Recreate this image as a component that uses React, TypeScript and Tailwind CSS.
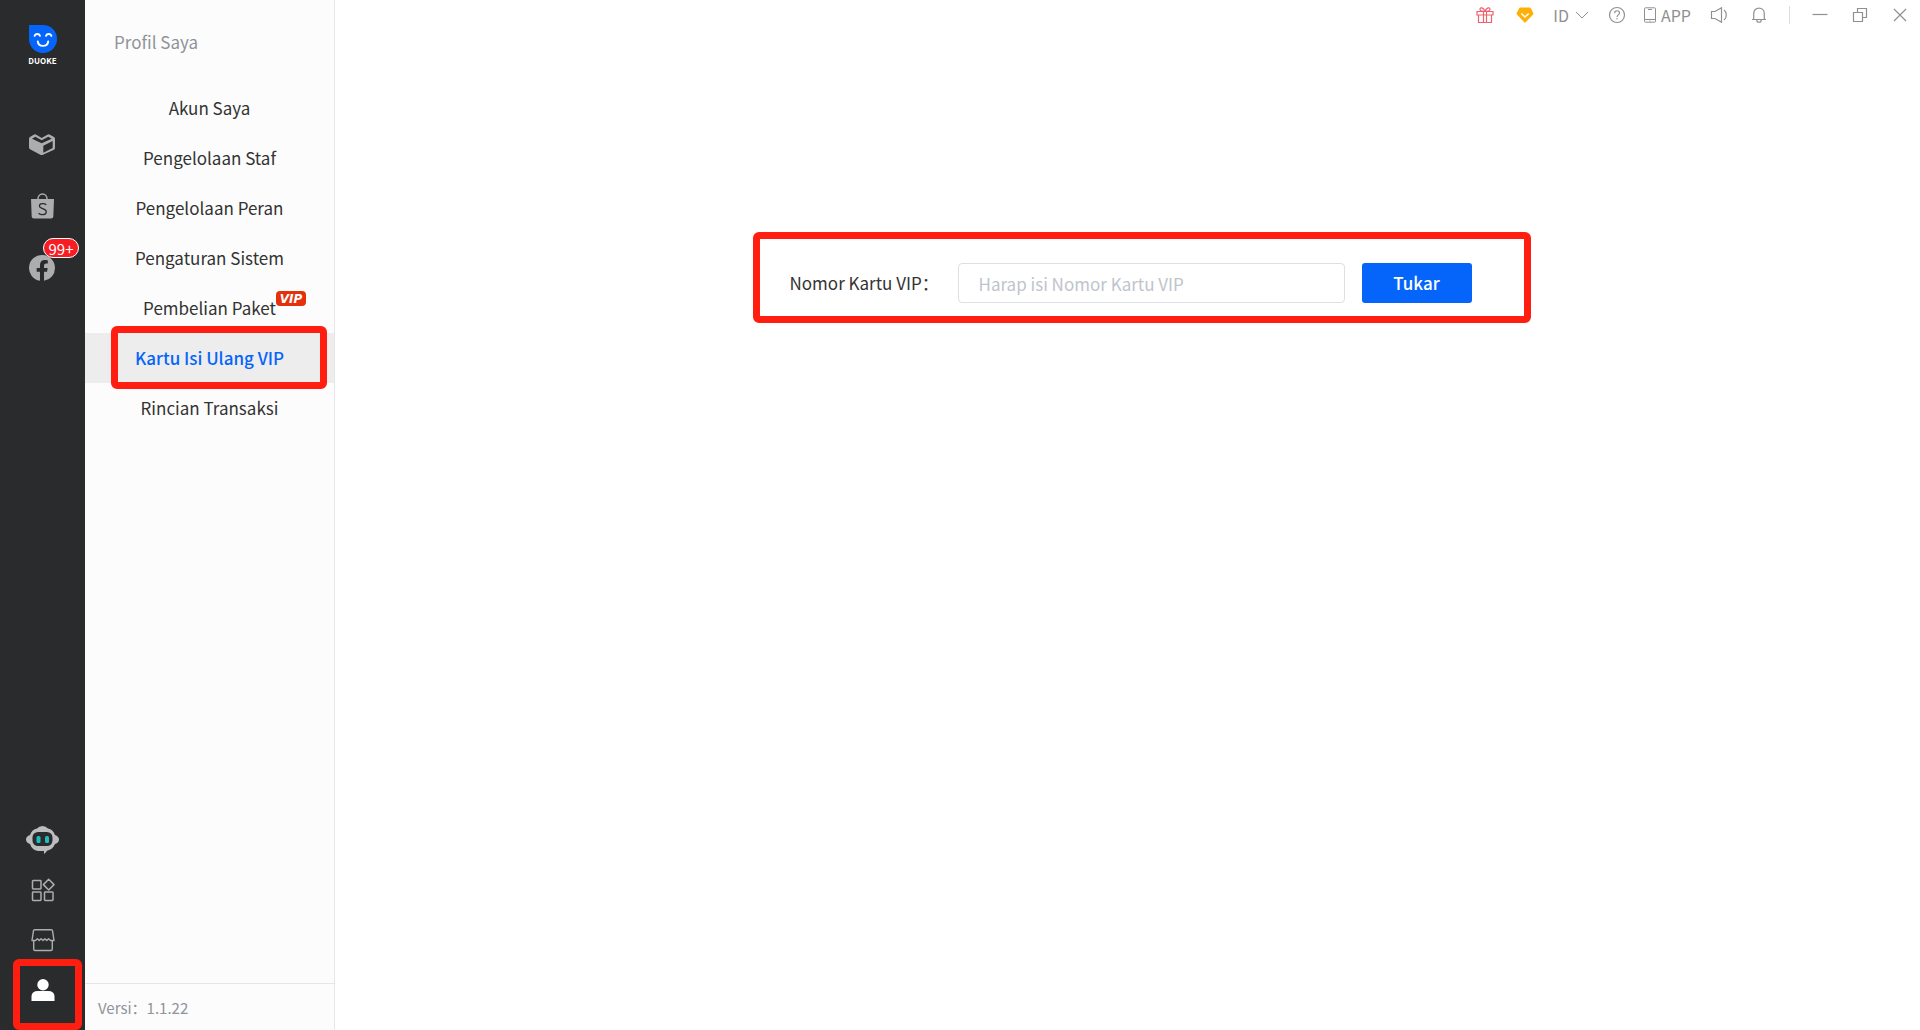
import type { ReactNode } from "react";

const menu = [
  { label: "Akun Saya" },
  { label: "Pengelolaan Staf" },
  { label: "Pengelolaan Peran" },
  { label: "Pengaturan Sistem" },
  { label: "Pembelian Paket", vip: true },
  { label: "Kartu Isi Ulang VIP", active: true },
  { label: "Rincian Transaksi" },
];

function Logo() {
  return (
    <svg width="28" height="28" viewBox="0 0 28 28" fill="none" aria-hidden="true">
      <path d="M0 0h14a14 14 0 1 1-14 14z" fill="#0565fb" />
      <g stroke="#fff" strokeWidth="1.9" strokeLinecap="round">
        <path d="M5.6 10.800a2.900 2.900 0 0 1 5.400 0M17 10.800a2.900 2.900 0 0 1 5.400 0" />
        <path d="M8.800 16.400c.5 6 9.900 6 10.400 0" />
      </g>
    </svg>
  );
}

function BoxIcon() {
  return (
    <svg width="26" height="21" viewBox="0 0 78 63" aria-hidden="true">
      <path d="M14 2q4-2 8 0l16 10 17-10q4-2 8 0l12 7q3 2 3 6v26q0 4-3 6L42 62q-4 2-8 0L3 46q-3-2-3-6V15q0-4 3-6z" fill="#adadad" />
      <path d="M9 14l10-6 19 11 20-11 10 6-30 14z" fill="#292b2d" />
      <path d="M43 35l28-14v21L43 56z" fill="#292b2d" />
    </svg>
  );
}

function BagIcon() {
  return (
    <svg width="23" height="26" viewBox="0 0 23 26" fill="none" aria-hidden="true">
      <path d="M0 6h23l-.7 17.500q-.1 2-2.300 2H3q-2.200 0-2.300-2z" fill="#adadad" />
      <path d="M6.800 7c0-8 9.400-8 9.400 0" stroke="#adadad" strokeWidth="1.500" />
      <path d="M15.300 11.800c-1.500-1.500-6.900-1.900-6.900 1.100 0 3.200 6.900 2.200 6.900 5.800 0 3.700-5.600 3.500-7.700 1.500" stroke="#292b2d" strokeWidth="1.200" />
    </svg>
  );
}

function FacebookIcon() {
  return (
    <svg width="26" height="26" viewBox="0 0 24 24" fill="#adadad" aria-hidden="true">
      <path d="M24 12A12 12 0 1 0 10.130 23.850V15.470H7.080V12h3.050V9.360c0-3.010 1.790-4.670 4.530-4.670 1.310 0 2.690.23 2.690.23v2.960h-1.510c-1.490 0-1.960.92-1.960 1.870V12h3.330l-.53 3.470h-2.800v8.380A12 12 0 0 0 24 12z" />
    </svg>
  );
}

function RobotIcon() {
  return (
    <svg width="33" height="28" viewBox="0 0 33 28" aria-hidden="true">
      <path d="M11 2.500Q13 0 16.500 0T22 2.500q5 .8 7 6.500 4 1.500 4 4.500T29 18q-2 5.500-8 6.700-1 1.800-3 3.300v-3h-6Q6 24 4 18 0 16.500 0 13.500T4 9Q6 3.300 11 2.500z" fill="#bdbdbd" />
      <rect x="6.500" y="6" width="20" height="14" rx="5.500" fill="#292b2d" />
      <rect x="10.500" y="10" width="4" height="7" rx="1.500" fill="#20bdc0" />
      <rect x="19" y="10" width="4" height="7" rx="1.500" fill="#20bdc0" />
    </svg>
  );
}

function AppsIcon() {
  return (
    <svg width="24" height="24" viewBox="0 0 24 24" fill="none" stroke="#adadad" strokeWidth="1.500" aria-hidden="true">
      <rect x="1.500" y="2.500" width="8.500" height="8.500" rx=".7" />
      <rect x="1.500" y="14" width="8.500" height="8.500" rx=".7" />
      <rect x="13.500" y="14" width="8.500" height="8.500" rx=".7" />
      <path d="M17.700 1.200l5.300 5.400-5.300 5.400-5.300-5.400z" strokeLinejoin="round" />
    </svg>
  );
}

function ShopIcon() {
  return (
    <svg width="24" height="24" viewBox="0 0 24 24" fill="none" stroke="#adadad" strokeWidth="1.400" strokeLinejoin="round" aria-hidden="true">
      <path d="M3.700 1.700h16.600q1 0 1.200 1L23 12.500H19.500l-1.900-1.800-1.900 1.800-1.800-1.800-1.900 1.800-1.900-1.800-1.900 1.800-1.800-1.800-1.900 1.800H1L2.500 2.700q.2-1 1.200-1z" />
      <path d="M2.700 13v8q0 1.500 1.500 1.500h15.600q1.500 0 1.500-1.500v-8" />
    </svg>
  );
}

function UserIcon() {
  return (
    <svg width="24" height="22" viewBox="0 0 24 22" fill="#fff" aria-hidden="true">
      <circle cx="12" cy="5.800" r="5.700" />
      <path d="M.5 22v-4.500Q.5 12 7 12h10q6.500 0 6.500 5.500V22z" />
    </svg>
  );
}

function VipTag() {
  return (
    <span className="absolute -top-1 left-full flex h-[15px] w-[30px] items-center justify-center rounded bg-[#e5310b] font-['DejaVu_Sans'] text-xs leading-none font-bold text-white italic">
      VIP
    </span>
  );
}

function Line({ children, color = "#909090" }: { children: ReactNode; color?: string }) {
  return (
    <svg width="18" height="18" viewBox="0 0 18 18" fill="none" stroke={color} strokeWidth="1.200" aria-hidden="true">
      {children}
    </svg>
  );
}

function BarButton({ label, children }: { label: string; children: ReactNode }) {
  return (
    <button aria-label={label} className="flex h-full w-10 items-center justify-center">
      {children}
    </button>
  );
}

function TopBar() {
  return (
    <header className="flex h-[30px] items-center justify-end text-base text-[#909090]">
      <BarButton label="Hadiah">
        <Line color="#f0616b">
          <path d="M1 5.500h16v3.500H1zM2.500 9v7.500h13V9M7.500 5.500v11M10.500 5.500v11M9 5.300C7.500 1.500 4 .8 4 3.200c0 1.500 2 2.100 5 2.100zM9 5.300c1.500-3.800 5-4.500 5-2.100 0 1.500-2 2.100-5 2.100z" />
        </Line>
      </BarButton>
      <BarButton label="Paket VIP">
        <svg width="18" height="18" viewBox="0 0 18 18" aria-hidden="true">
          <path d="M4.500 1.500h9q.8 0 1.200.6L17.300 7q.4.800-.2 1.500L10 16q-1 1-2 0L.9 8.500Q.3 7.800.7 7l2.600-4.900q.4-.6 1.200-.6z" fill="#ffb008" />
          <path d="M5.300 7.500L9 11l3.700-3.500" fill="none" stroke="#fff" strokeWidth="1.500" />
        </svg>
      </BarButton>
      <button className="mx-2 flex h-full items-center gap-1.5">
        ID
        <svg width="14" height="14" viewBox="0 0 14 14" fill="none" stroke="#909090" aria-hidden="true">
          <path d="M1 4l6 6 6-6" />
        </svg>
      </button>
      <BarButton label="Bantuan">
        <Line>
          <circle cx="9" cy="9" r="7.500" />
          <path d="M6.600 7.200c0-3.300 4.900-3.200 4.900-.2 0 1.900-2.500 1.900-2.500 4M9 12v1.300" />
        </Line>
      </BarButton>
      <button className="mr-2 ml-1.5 flex h-full items-center gap-1">
        <svg width="14" height="16" viewBox="0 0 14 16" fill="none" stroke="#909090" aria-hidden="true">
          <rect x="1.500" y=".8" width="11" height="14.400" rx="1" />
          <path d="M5 2.500h4M1.500 12.500h11M6.500 14h1" />
        </svg>
        APP
      </button>
      <BarButton label="Suara">
        <Line>
          <path d="M1.500 5.500H5L11.500 1.800v14.400L5 12.500H1.500zM14 4c3 2 3 8 0 10" />
        </Line>
      </BarButton>
      <BarButton label="Notifikasi">
        <Line>
          <path d="M2 13.500h14M3.700 13.500V7.800c0-7.600 10.600-7.600 10.600 0v5.700M6.800 14c0 3 4.400 3 4.400 0" />
        </Line>
      </BarButton>
      <span className="mx-2.5 h-[18px] w-px bg-[#ddd]" />
      <BarButton label="Kecilkan">
        <Line>
          <path d="M1.500 8.500h15" />
        </Line>
      </BarButton>
      <BarButton label="Pulihkan">
        <Line>
          <path d="M2.500 6.500h9v9h-9zM6.500 6.500v-4h9v9h-4" />
        </Line>
      </BarButton>
      <BarButton label="Tutup">
        <Line>
          <path d="M3 3l12 12M15 3L3 15" />
        </Line>
      </BarButton>
    </header>
  );
}

function RailButton({ label, tall, children }: { label: string; tall?: boolean; children: ReactNode }) {
  return (
    <button
      aria-label={label}
      className={tall ? "relative flex h-[62px] w-full items-center justify-center pr-px" : "relative flex h-[50px] w-full items-center justify-center"}
    >
      {children}
    </button>
  );
}

function Rail() {
  return (
    <nav className="flex w-[85px] shrink-0 flex-col bg-[#292b2d] pt-[25px] pb-[15px]">
      <div className="mb-12 flex flex-col items-center gap-1">
        <Logo />
        <span className="text-[8px] leading-[8px] font-bold text-white">DUOKE</span>
      </div>
      <RailButton label="Pesanan" tall><BoxIcon /></RailButton>
      <RailButton label="Shopee" tall><BagIcon /></RailButton>
      <RailButton label="Facebook" tall>
        <FacebookIcon />
        <span className="absolute top-px right-1.5 flex h-5 w-9 items-center justify-center rounded-full border border-white bg-[#f81d22] text-[15px] leading-none text-white">
          99+
        </span>
      </RailButton>
      <div className="mt-auto">
        <RailButton label="Robot"><RobotIcon /></RailButton>
        <RailButton label="Aplikasi"><AppsIcon /></RailButton>
        <RailButton label="Toko"><ShopIcon /></RailButton>
        <RailButton label="Profil Saya">
          <UserIcon />
          <span className="absolute -top-1.5 right-[3px] -bottom-[15px] left-[13px] rounded-md border-7 border-[#ff1e10]" />
        </RailButton>
      </div>
    </nav>
  );
}

function ProfilePanel() {
  return (
    <aside className="flex w-[250px] shrink-0 flex-col border-r border-[#e6e6e6] bg-[#fcfcfc]">
      <h1 className="flex h-[83px] items-center pl-[29px] text-[17px] text-[#909399]">Profil Saya</h1>
      <ul className="flex-1">
        {menu.map((item) => (
          <li key={item.label} className="relative">
            <a
              href="#"
              className={
                item.active
                  ? "flex h-[50px] items-center justify-center bg-[#ededed] text-[17px] font-medium text-[#0565fb]"
                  : "flex h-[50px] items-center justify-center text-[17px] text-[#333]"
              }
            >
              <span className="relative">
                {item.label}
                {item.vip && <VipTag />}
              </span>
            </a>
            {item.active && (
              <span className="pointer-events-none absolute -top-[7px] right-[7px] -bottom-1.5 left-[26px] z-10 rounded-md border-7 border-[#ff1e10]" />
            )}
          </li>
        ))}
      </ul>
      <footer className="flex h-[47px] items-center border-t border-[#e6e6e6] pt-0.5 pl-[13px] text-[15px] text-[#909399]">
        Versi：1.1.22
      </footer>
    </aside>
  );
}

export default function App() {
  return (
    <div className="flex min-h-screen bg-white font-['Noto_Sans_CJK_SC',sans-serif]">
      <Rail />
      <ProfilePanel />
      <main className="min-w-0 flex-1">
        <TopBar />
        <div className="mt-[202px] flex justify-center pl-7">
          <form className="flex items-center rounded-md border-7 border-[#ff1e10] pt-6 pr-[52px] pb-[13px] pl-[30px] text-[17px]">
            <label htmlFor="card" className="w-[168px] text-[#333]">
              Nomor Kartu VIP：
            </label>
            <input
              id="card"
              type="text"
              placeholder="Harap isi Nomor Kartu VIP"
              className="h-10 w-[387px] rounded border border-[#dcdfe6] px-5 outline-none placeholder:text-[#c0c4cc]"
            />
            <button type="button" className="ml-[17px] h-10 w-[110px] rounded-[3px] bg-[#0565fb] font-medium text-white">
              Tukar
            </button>
          </form>
        </div>
      </main>
    </div>
  );
}
